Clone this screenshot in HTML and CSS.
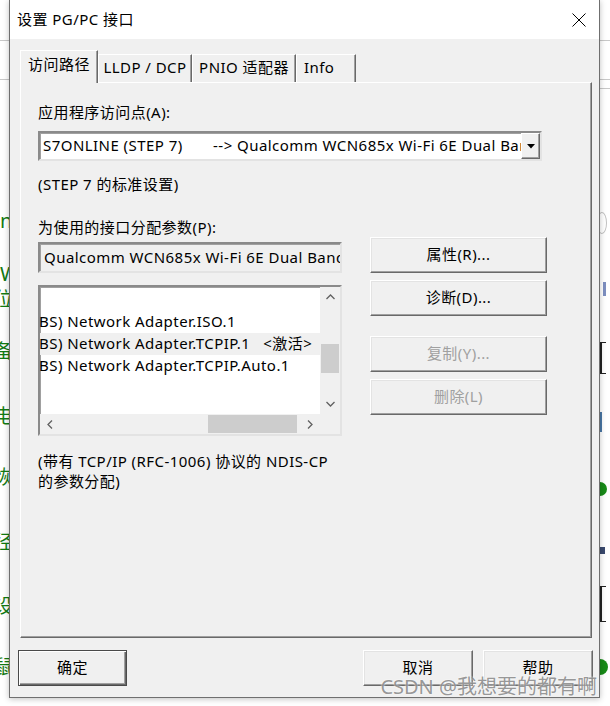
FILE: index.html
```html
<!DOCTYPE html>
<html lang="zh-CN">
  <head>
    <meta charset="UTF-8" />
    <title>设置 PG/PC 接口</title>
    <link rel="stylesheet" href="styles.css">
  </head>
  <body>
    <div class="desktop">
      <!-- 对话框后面的窗口，只露出左边一点 -->
      <div class="behind behind-left">
        <div class="rule"></div>
        <div class="rule"></div>
        <div class="peek-list">
          <div class="peek latin">n</div>
          <div class="peek latin">W</div>
          <div class="peek">位</div>
          <div class="peek">备</div>
          <div class="peek">电</div>
          <div class="peek">恢</div>
          <div class="peek">径</div>
          <div class="peek">设</div>
          <div class="peek">鼠</div>
        </div>
      </div>

      <div class="dialog">
        <div class="titlebar">
          <span class="title">设置 PG/PC 接口</span>
          <svg class="close" width="14" height="14" viewBox="0 0 14 14">
            <path d="M0.5 0.5 L13.5 13.5 M13.5 0.5 L0.5 13.5" stroke="#000" stroke-width="1" fill="none" />
          </svg>
        </div>

        <div class="dialog-body">
          <div class="tabs">
            <div class="tab active tab-path">访问路径</div>
            <div class="tab tab-lldp">LLDP / DCP</div>
            <div class="tab tab-pnio">PNIO 适配器</div>
            <div class="tab tab-info">Info</div>
          </div>

          <div class="panel">
            <div class="field-label">应用程序访问点(A):</div>
            <div class="combo">
              <span class="combo-text">S7ONLINE (STEP 7)       --&gt; Qualcomm WCN685x Wi-Fi 6E Dual Band Simultaneous (WLAN)</span>
              <span class="combo-btn">
                <svg width="8" height="5" viewBox="0 0 8 5"><path d="M0 0 H8 L4 4.5 Z" fill="#000" /></svg>
              </span>
            </div>
            <div class="note note-step">(STEP 7 的标准设置)</div>

            <div class="field-label label-params">为使用的接口分配参数(P):</div>
            <div class="param-row">
              <div class="param-left">
                <div class="readonly">Qualcomm WCN685x Wi-Fi 6E Dual Band Simultaneous (WLAN)</div>
                <div class="listbox">
                  <div class="list-items">
                    <div class="item">BS) Network Adapter.ISO.1</div>
                    <div class="item current">BS) Network Adapter.TCPIP.1<span class="state">&lt;激活&gt;</span></div>
                    <div class="item">BS) Network Adapter.TCPIP.Auto.1</div>
                  </div>
                  <div class="vscroll">
                    <span class="arrow">
                      <svg width="9" height="6" viewBox="0 0 9 6"><path d="M0.5 5 L4.5 1 L8.5 5" stroke="#606060" stroke-width="1.3" fill="none" /></svg>
                    </span>
                    <span class="thumb v-thumb"></span>
                    <span class="arrow arrow-end">
                      <svg width="9" height="6" viewBox="0 0 9 6"><path d="M0.5 1 L4.5 5 L8.5 1" stroke="#606060" stroke-width="1.3" fill="none" /></svg>
                    </span>
                  </div>
                  <div class="hscroll">
                    <span class="arrow">
                      <svg width="6" height="9" viewBox="0 0 6 9"><path d="M5 0.5 L1 4.5 L5 8.5" stroke="#606060" stroke-width="1.3" fill="none" /></svg>
                    </span>
                    <span class="thumb h-thumb"></span>
                    <span class="arrow arrow-end">
                      <svg width="6" height="9" viewBox="0 0 6 9"><path d="M1 0.5 L5 4.5 L1 8.5" stroke="#606060" stroke-width="1.3" fill="none" /></svg>
                    </span>
                  </div>
                  <div class="scroll-corner"></div>
                </div>
              </div>

              <div class="param-buttons">
                <button class="btn">属性(R)...</button>
                <button class="btn">诊断(D)...</button>
                <button class="btn disabled btn-gap">复制(Y)...</button>
                <button class="btn disabled">删除(L)</button>
              </div>
            </div>

            <div class="note note-bottom">(带有 TCP/IP (RFC-1006) 协议的 NDIS-CP<br>的参数分配)</div>
          </div>

          <div class="footer">
            <button class="btn btn-default">确定</button>
            <button class="btn btn-footer btn-cancel">取消</button>
            <button class="btn btn-footer">帮助</button>
          </div>
        </div>

        <div class="watermark">CSDN @我想要的都有啊</div>
      </div>

      <!-- 右边露出的一点点 -->
      <div class="behind behind-right">
        <div class="rule"></div>
        <div class="rule"></div>
        <div class="rule"></div>
        <div class="bit bit-ring"></div>
        <div class="bit bit-blue"></div>
        <div class="bit bit-box"></div>
        <div class="bit bit-line"></div>
        <div class="bit bit-dot"></div>
        <div class="bit bit-navy"></div>
        <div class="bit bit-box bit-box2"></div>
        <div class="bit bit-dot bit-dot2"></div>
      </div>
    </div>
  </body>
</html>
```

FILE: styles.css
```css
body {
  margin: 0;
  width: 610px;
  height: 706px;
  overflow: hidden;
  background: #ffffff;
  font-family: "Noto Sans", "Noto Sans CJK SC", sans-serif;
  font-size: 15px;
  line-height: 20px;
  letter-spacing: 0.45px;
  color: #000;
}

.desktop {
  display: flex;
  height: 706px;
}

/* 背景窗口 */
.behind {
  display: flex;
  flex-direction: column;
  overflow: hidden;
}

.behind-left {
  width: 9px;
}

.behind-right {
  flex: 1;
}

.rule {
  height: 1px;
  background: #c8c8c8;
  flex: none;
}

.behind .rule:nth-child(1) {
  margin-top: 40px;
}

.behind .rule:nth-child(2) {
  margin-top: 38px;
}

.behind .rule:nth-child(3) {
  margin-top: 8px;
}

.peek-list {
  display: flex;
  flex-direction: column;
}

.peek {
  height: 20px;
  line-height: 20px;
  font-size: 19px;
  color: #127a12;
  white-space: nowrap;
  margin-left: -6px;
}

.peek.latin {
  margin-left: 0;
  font-size: 20px;
}

.peek:nth-child(1) { margin-top: 131px; }
.peek:nth-child(2) { margin-top: 33px; }
.peek:nth-child(3) { margin-top: 5px; }
.peek:nth-child(4) { margin-top: 32px; }
.peek:nth-child(5) { margin-top: 45px; }
.peek:nth-child(6) { margin-top: 41px; }
.peek:nth-child(7) { margin-top: 45px; }
.peek:nth-child(8) { margin-top: 44px; }
.peek:nth-child(9) { margin-top: 41px; }

.bit {
  flex: none;
}

.bit-ring {
  margin-top: 123px;
  width: 8px;
  height: 20px;
  margin-left: -3px;
  border: 1px solid #c2c2c2;
  border-radius: 50%;
}

.bit-blue {
  margin-top: 48px;
  width: 3px;
  height: 14px;
  background: #7d8fc0;
  margin-left: 3px;
}

.bit-box {
  margin-top: 46px;
  width: 4px;
  height: 30px;
  border: 1px solid #222;
  border-left-width: 2px;
  border-right: 0;
}

.bit-line {
  margin-top: 38px;
  width: 2px;
  height: 20px;
  background: #4a78a6;
}

.bit-dot {
  margin-top: 50px;
  width: 14px;
  height: 14px;
  margin-left: -7px;
  border-radius: 50%;
  background: #188b18;
}

.bit-navy {
  margin-top: 51px;
  width: 5px;
  height: 7px;
  background: #3a4a6e;
}

.bit-box2 {
  margin-top: 32px;
  height: 34px;
}

.bit-dot2 {
  margin-top: 37px;
  width: 16px;
  height: 16px;
  margin-left: -8px;
}

/* 对话框 */
.dialog {
  position: relative;
  width: 589px;
  height: 697px;
  flex: none;
  display: flex;
  flex-direction: column;
  background: #f0f0f0;
  border: 1px solid #6f6f6f;
  border-top: 0;
  box-shadow: 0 1px 6px rgba(0, 0, 0, 0.25);
}

.titlebar {
  height: 39px;
  flex: none;
  background: #fff;
  display: flex;
  align-items: center;
  justify-content: space-between;
  padding: 0 13px 0 7px;
}

.title {
  font-size: 15px;
  margin-top: -2px;
}

.close {
  display: block;
}

.dialog-body {
  flex: 1;
  display: flex;
  flex-direction: column;
  padding: 11px 7px 11px 10px;
}

.tabs {
  display: flex;
  align-items: flex-end;
  height: 33px;
  margin-bottom: -1px;
  position: relative;
  z-index: 1;
}

.tab {
  box-sizing: border-box;
  height: 28px;
  margin-bottom: 1px;
  padding-bottom: 3px;
  display: flex;
  align-items: center;
  justify-content: center;
  background: #f0f0f0;
  border: 1px solid;
  border-color: #fff #696969 transparent #fff;
  border-bottom: 0;
  box-shadow: inset -1px 0 #a0a0a0;
  white-space: nowrap;
}

.tab.active {
  height: 33px;
  margin-bottom: 0;
  padding-bottom: 7px;
}

.tab-path { width: 78px; }
.tab-lldp { width: 94px; }
.tab-pnio { width: 104px; }
.tab-info { width: 60px; justify-content: flex-start; padding-left: 7px; }

.panel {
  flex: 1;
  border: 1px solid;
  border-color: #fff #696969 #696969 #fff;
  box-shadow: inset -1px -1px #a0a0a0;
  padding: 19px 0 0 17px;
}

.field-label {
  height: 20px;
}

/* 下拉框 */
.combo {
  box-sizing: border-box;
  width: 504px;
  height: 30px;
  margin-top: 9px;
  display: flex;
  background: #fff;
  border: 2px solid;
  border-color: #8a8a8a #e3e3e3 #e3e3e3 #8a8a8a;
  box-shadow: inset 1px 1px #a0a0a0;
}

.combo-text {
  flex: 1;
  overflow: hidden;
  white-space: pre;
  padding-left: 3px;
  line-height: 25px;
}

.combo-btn {
  box-sizing: border-box;
  width: 19px;
  height: 26px;
  display: flex;
  align-items: center;
  justify-content: center;
  background: #f0f0f0;
  border: 1px solid;
  border-color: #fff #696969 #696969 #fff;
  box-shadow: inset -1px -1px #a0a0a0;
}

.combo-btn svg {
  display: block;
}

.note-step {
  margin-top: 13px;
}

.label-params {
  margin-top: 23px;
}

.param-row {
  display: flex;
  gap: 28px;
}

.param-left {
  width: 304px;
}

.readonly {
  box-sizing: border-box;
  height: 31px;
  margin-top: 5px;
  padding-left: 4px;
  line-height: 26px;
  white-space: nowrap;
  overflow: hidden;
  border: 2px solid;
  border-color: #8a8a8a #e3e3e3 #e3e3e3 #8a8a8a;
  box-shadow: inset 1px 1px #a0a0a0;
}

/* 列表框 */
.listbox {
  box-sizing: border-box;
  height: 151px;
  margin-top: 12px;
  display: grid;
  grid-template-columns: 1fr 20px;
  grid-template-rows: 1fr 20px;
  background: #fff;
  border: 2px solid;
  border-color: #8a8a8a #e3e3e3 #e3e3e3 #8a8a8a;
  box-shadow: inset 1px 1px #a0a0a0;
}

.list-items {
  padding-top: 24px;
  overflow: hidden;
}

.item {
  height: 22px;
  line-height: 21px;
  white-space: nowrap;
  text-indent: -1px;
}

.item.current {
  background: #f0f0f0;
}

.state {
  margin-left: 13px;
}

.vscroll {
  display: flex;
  flex-direction: column;
  align-items: center;
  background: #f0f0f0;
}

.hscroll {
  display: flex;
  align-items: center;
  background: #f0f0f0;
}

.scroll-corner {
  background: #f0f0f0;
}

.arrow {
  width: 20px;
  height: 20px;
  display: flex;
  align-items: center;
  justify-content: center;
  flex: none;
}

.arrow svg {
  display: block;
}

.arrow-end {
  margin-top: auto;
  margin-left: auto;
}

.hscroll .arrow-end {
  margin-top: 0;
}

.vscroll .arrow-end {
  margin-left: 0;
}

.thumb {
  background: #cdcdcd;
  flex: none;
}

.v-thumb {
  width: 18px;
  height: 29px;
  margin-top: 37px;
}

.h-thumb {
  width: 89px;
  height: 18px;
  margin-left: 148px;
}

/* 按钮 */
.btn {
  box-sizing: border-box;
  height: 36px;
  padding: 0 0 3px;
  font: inherit;
  letter-spacing: inherit;
  color: #000;
  background: #f0f0f0;
  border: 1px solid;
  border-color: #fff #696969 #696969 #fff;
  box-shadow: inset -1px -1px #a0a0a0, inset 1px 1px #e3e3e3;
}

.btn.disabled {
  color: #a0a0a0;
}

.param-buttons {
  display: flex;
  flex-direction: column;
  gap: 7px;
  width: 177px;
}

.btn-gap {
  margin-top: 13px;
}

.note-bottom {
  margin-top: 15px;
}

.footer {
  display: flex;
  margin: 12px -1px 0 -2px;
  gap: 10px;
}

.btn-default {
  width: 109px;
  border-color: #4a4a4a;
  box-shadow: inset 1px 1px #fff, inset -1px -1px #696969, inset -2px -2px #a0a0a0;
}

.btn-footer {
  width: 110px;
}

.btn-cancel {
  margin-left: auto;
}

.watermark {
  position: absolute;
  right: 2px;
  bottom: -1px;
  font-size: 20px;
  line-height: 22px;
  letter-spacing: 0;
  color: rgba(125, 125, 125, 0.8);
  text-shadow: 0 0 2px #fff;
  white-space: nowrap;
}
```
